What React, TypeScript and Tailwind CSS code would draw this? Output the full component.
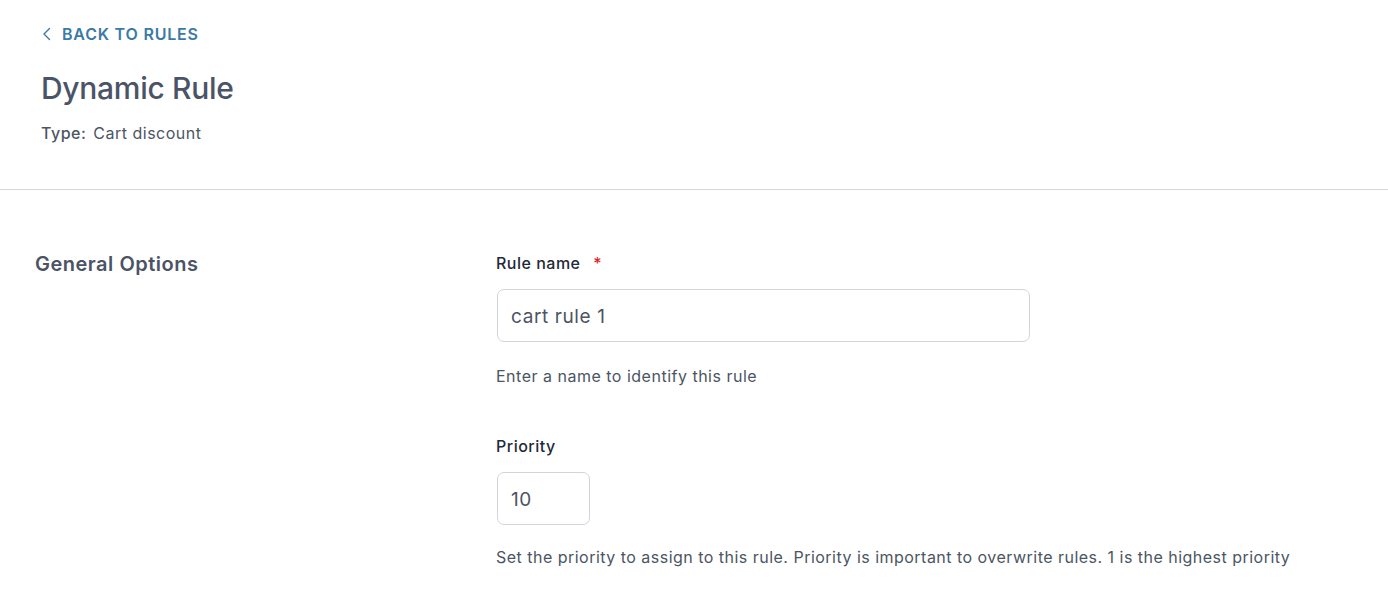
import React from "react";

export default function App() {
  return (
    <div className="min-h-[606px] bg-white font-['Inter',sans-serif] text-[#4b5563] tracking-[0.5px]">
      <header className="pl-[41px] pt-[22px] pb-[44px] border-b border-[#d5d8dc]">
        <a className="flex items-center gap-[10px] text-[16px] leading-6 font-semibold text-[#3b7aa6] tracking-[0.8px] uppercase">
          <svg width="10" height="14" viewBox="0 0 10 14" fill="none" className="ml-[1px]">
            <path d="M7.5 1.5L2 7l5.5 5.5" stroke="#3b7aa6" strokeWidth="1.4" strokeLinecap="round" strokeLinejoin="round" />
          </svg>
          Back to rules
        </a>
        <h1 className="mt-[24px] text-[30px] leading-9 font-medium text-[#4a5466] tracking-[-0.01em]">Dynamic Rule</h1>
        <p className="mt-[15px] flex text-[16px] leading-6 text-[#4b5563]">
          <span className="font-medium mr-[7px]">Type:</span>
          <span>Cart discount</span>
        </p>
      </header>
      <main className="flex pt-[61px]">
        <div className="w-[496px] shrink-0 pl-[35px]">
          <h2 className="-mt-[1px] text-[20px] leading-7 font-semibold text-[#4a5466]">General Options</h2>
        </div>
        <div className="flex flex-col pl-[1px]">
          <label className="-ml-[1px] text-[16px] leading-6 font-medium text-[#1f2937]">
            Rule name <span className="ml-[8px] text-[#dc2626]">*</span>
          </label>
          <div className="mt-[14px] w-[533px] h-[53px] rounded-[7px] border border-[#d1d5db] flex items-center pt-[3px] px-[13px] text-[19px] tracking-[0.6px] text-[#4b5563]">
            cart rule 1
          </div>
          <p className="-ml-[1px] mt-[22px] text-[16px] leading-6 text-[#4b5563]">Enter a name to identify this rule</p>
          <label className="-ml-[1px] mt-[46px] text-[16px] leading-6 font-medium text-[#1f2937]">Priority</label>
          <div className="mt-[14px] w-[93px] h-[53px] rounded-[7px] border border-[#d1d5db] flex items-center pt-[3px] px-[13px] text-[19px] tracking-[0.6px] text-[#4b5563]">
            10
          </div>
          <p className="-ml-[1px] mt-[20px] text-[16px] leading-6 tracking-[0.48px] text-[#4b5563]">
            Set the priority to assign to this rule. Priority is important to overwrite rules. 1 is the highest priority
          </p>
        </div>
      </main>
    </div>
  );
}
